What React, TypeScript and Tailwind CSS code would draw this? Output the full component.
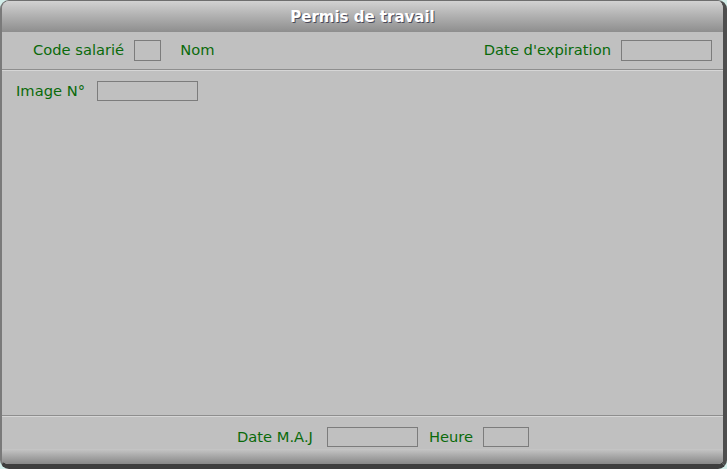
import React from "react";

const label = "text-[#0a6a0a] text-[14.7px] leading-none whitespace-nowrap";
const box = "border border-[#7c7c7c] bg-[#c0c0c0]";

export default function App() {
  return (
    <div className="w-[727px] h-[469px] bg-[#d3eeea]" style={{ fontFamily: '"DejaVu Sans", Verdana, sans-serif' }}>
      <div className="w-full h-full flex flex-col rounded-[9px] overflow-hidden border-l-2 border-l-[#7a7a7a] border-r-[4px] border-r-[#4e4e4e] border-t border-t-[#6e6e6e] border-b-[5px] border-b-[#3e3e3e] bg-[#c0c0c0]">
        {/* title */}
        <div className="h-[31px] shrink-0 flex items-center justify-center bg-gradient-to-b from-[#d2d2d2] to-[#8e8e8e]">
          <span className="text-white font-bold text-[15px] leading-none pt-[2px]" style={{ textShadow: "1px 1px 0 #4a4a5a" }}>
            Permis de travail
          </span>
        </div>
        {/* header row */}
        <div className="h-[37px] shrink-0 flex items-center pl-[31px] pr-[11px]">
          <span className={label}>Code salarié</span>
          <div className={`${box} w-[27px] h-[21px] ml-[10px]`} />
          <span className={`${label} ml-[19px]`}>Nom</span>
          <div className="flex-1" />
          <span className={label}>Date d'expiration</span>
          <div className={`${box} w-[91px] h-[21px] ml-[10px]`} />
        </div>
        <div className="h-[2px] shrink-0 border-t border-t-[#8e8e8e] border-b border-b-[#d6d6d6]" />
        {/* content */}
        <div className="flex-1 pl-[14px] pt-[10px]">
          <div className="flex items-center">
            <span className={label}>Image N°</span>
            <div className={`${box} w-[101px] h-[20px] ml-[12px]`} />
          </div>
        </div>
        <div className="h-[2px] shrink-0 border-t border-t-[#8e8e8e] border-b border-b-[#d6d6d6]" />
        {/* footer */}
        <div className="h-[32px] shrink-0 flex items-start pt-[10px] pl-[235px]">
          <div className="flex items-center">
            <span className={label}>Date M.A.J</span>
            <div className={`${box} w-[91px] h-[20px] ml-[14px]`} />
            <span className={`${label} ml-[11px]`}>Heure</span>
            <div className={`${box} w-[46px] h-[20px] ml-[10px]`} />
          </div>
        </div>
        <div className="h-[15px] shrink-0 bg-gradient-to-b from-[#c6c6c6] to-[#888888]" />
      </div>
    </div>
  );
}
